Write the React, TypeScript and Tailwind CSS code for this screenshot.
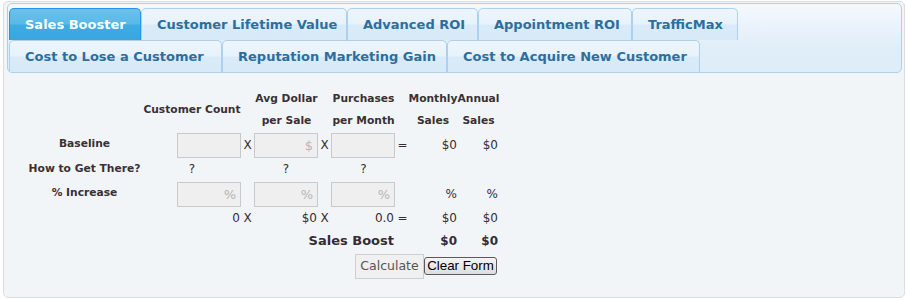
import React from "react";

const tabs = [
  { label: "Sales Booster", w: "w-[132px]", active: true },
  { label: "Customer Lifetime Value", w: "w-[206px]" },
  { label: "Advanced ROI", w: "w-[131px]" },
  { label: "Appointment ROI", w: "w-[154px]" },
  { label: "TrafficMax", w: "w-[106px]" },
  { label: "Cost to Lose a Customer", w: "w-[213px]" },
  { label: "Reputation Marketing Gain", w: "w-[225px]" },
  { label: "Cost to Acquire New Customer", w: "w-[253px]" },
];

function Input({ ph }: { ph?: string }) {
  return (
    <input
      readOnly
      placeholder={ph}
      className="mt-[2px] box-border h-[25px] w-[64px] self-start border border-[#c9c9c9] bg-[#efefef] pr-[4px] text-right text-[13px] text-[#333] outline-none placeholder:text-[#b5b5b5]"
    />
  );
}

function Cell({ w, children, align = "center", extra = "" }: { w: string; children?: React.ReactNode; align?: "center" | "right"; extra?: string }) {
  return (
    <div
      className={`flex h-full items-center whitespace-nowrap ${w} ${align === "right" ? "justify-end pr-[1px]" : "justify-center"} ${extra}`}
    >
      {children}
    </div>
  );
}

export default function App() {
  return (
    <div className="h-[299px] w-[907px] bg-white font-['DejaVu_Sans',sans-serif]">
      <div className="ml-[3px] mt-[1px] box-border h-[297px] w-[902px] rounded-[5px] border border-[#dddddd] bg-[#f2f5f7] pl-[3px] pr-[2px] pt-[1px] text-[#362b36]">
        {/* tab header */}
        <div className="box-border flex h-[70px] flex-wrap content-start rounded-[5px] border border-[#aed0ea] bg-[linear-gradient(to_bottom,#f5f9fd_0%,#e6f1fa_45%,#deedf7_70%,#deedf7_100%)] pl-[1px] pt-[4px]">
          {tabs.map((t) => (
            <div
              key={t.label}
              className={`box-border flex h-[32px] items-center rounded-t-[5px] border border-b-0 pl-[15px] text-[13px] font-bold whitespace-nowrap ${t.w} ${
                t.active
                  ? "border-[#2694e8] bg-[linear-gradient(to_bottom,#6cc1ea_0%,#5ab8e7_48%,#3eabe3_52%,#3aa6df_100%)] text-white"
                  : "border-[#aed0ea] bg-[linear-gradient(to_bottom,#eef6fc_0%,#e7f2fb_48%,#d9ebf9_52%,#d7eaf8_100%)] text-[#2c6f9f]"
              }`}
            >
              {t.label}
            </div>
          ))}
        </div>

        {/* form */}
        <div className="pt-[15px] text-[12px] text-[#362b36]">
          {/* header row */}
          <div className="flex h-[43px] text-[10.7px] font-bold leading-[21.5px] text-[#3a3035]">
            <div className="w-[137px]" />
            <Cell w="w-[96px]">Customer Count</Cell>
            <div className="flex w-[93px] flex-col items-center whitespace-nowrap">
              <span>Avg Dollar</span>
              <span>per Sale</span>
            </div>
            <div className="flex w-[61px] flex-col items-center whitespace-nowrap">
              <span>Purchases</span>
              <span>per Month</span>
            </div>
            <div className="w-[15px]" />
            <div className="flex w-[48px] flex-col items-center whitespace-nowrap">
              <span>Monthly</span>
              <span>Sales</span>
            </div>
            <div className="flex w-[43px] flex-col items-center whitespace-nowrap">
              <span>Annual</span>
              <span>Sales</span>
            </div>
          </div>

          {/* baseline */}
          <div className="flex h-[27px]">
            <Cell w="w-[155px]" extra="text-[10.7px] font-bold text-[#3a3035]">Baseline</Cell>
            <div className="w-[15px]" />
            <Input />
            <Cell w="w-[13px]">X</Cell>
            <Input ph="$" />
            <Cell w="w-[13px]">X</Cell>
            <Input />
            <Cell w="w-[15px]">=</Cell>
            <Cell w="w-[48px]" align="right">$0</Cell>
            <Cell w="w-[41px]" align="right">$0</Cell>
          </div>

          {/* how to get there */}
          <div className="flex h-[22px]">
            <Cell w="w-[155px]" extra="text-[10.7px] font-bold text-[#3a3035]">How to Get There?</Cell>
            <Cell w="w-[60px]">?</Cell>
            <Cell w="w-[128px]">?</Cell>
            <Cell w="w-[27px]">?</Cell>
          </div>

          {/* % increase */}
          <div className="flex h-[27px]">
            <Cell w="w-[155px]" extra="text-[10.7px] font-bold text-[#3a3035]">% Increase</Cell>
            <div className="w-[15px]" />
            <Input ph="%" />
            <div className="w-[13px]" />
            <Input ph="%" />
            <div className="w-[13px]" />
            <Input ph="%" />
            <div className="w-[15px]" />
            <Cell w="w-[48px]" align="right">%</Cell>
            <Cell w="w-[41px]" align="right">%</Cell>
          </div>

          {/* results */}
          <div className="flex h-[21px]">
            <div className="w-[170px]" />
            <Cell w="w-[64px]" align="right">0</Cell>
            <Cell w="w-[13px]">X</Cell>
            <Cell w="w-[64px]" align="right">$0</Cell>
            <Cell w="w-[13px]">X</Cell>
            <Cell w="w-[64px]" align="right">0.0</Cell>
            <Cell w="w-[15px]">=</Cell>
            <Cell w="w-[48px]" align="right">$0</Cell>
            <Cell w="w-[41px]" align="right">$0</Cell>
          </div>

          {/* sales boost */}
          <div className="flex h-[26px] font-bold">
            <Cell w="w-[388px]" align="right" extra="text-[13px]">Sales Boost</Cell>
            <div className="w-[15px]" />
            <Cell w="w-[48px]" align="right">$0</Cell>
            <Cell w="w-[41px]" align="right">$0</Cell>
          </div>

          {/* buttons */}
          <div className="flex items-start pl-[348px]">
            <button className="box-border h-[25px] w-[69px] border border-[#cfcfcf] bg-[#f0f0f0] text-[12.5px] text-[#555]">
              Calculate
            </button>
            <button className="mt-[3px] box-border h-[18px] w-[73px] rounded-[3px] border border-[#5a5a5a] bg-[linear-gradient(to_bottom,#f4f4f4,#dedede)] font-['Liberation_Sans',sans-serif] text-[13.33px] leading-none text-black">
              Clear Form
            </button>
          </div>
        </div>
      </div>
    </div>
  );
}
